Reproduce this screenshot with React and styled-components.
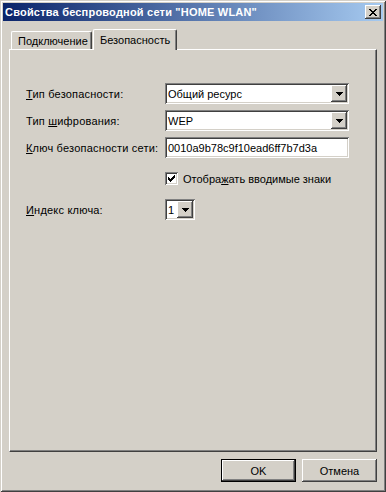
import React from 'react';
import styled, { createGlobalStyle } from 'styled-components';

const GlobalStyle = createGlobalStyle`
  html, body {
    margin: 0;
    padding: 0;
    background: #d4d0c8;
  }
  body {
    font-family: "Liberation Sans", Arial, sans-serif;
    font-size: 11px;
    color: #000;
  }
`;

const raised = `
  box-shadow: inset -1px -1px #404040, inset 1px 1px #ffffff,
    inset -2px -2px #808080, inset 2px 2px #d4d0c8;
`;

const sunken = `
  box-shadow: inset 1px 1px #808080, inset -1px -1px #ffffff,
    inset 2px 2px #404040, inset -2px -2px #d4d0c8;
`;

export default function App() {
  return (
    <>
      <GlobalStyle />
      <Window>
        <TitleBar>
          <Title>Свойства беспроводной сети "HOME WLAN"</Title>
          <CloseButton>
            <svg width="8" height="7" viewBox="0 0 8 7" shapeRendering="crispEdges">
              <path
                fill="#000"
                d="M0 0h2v1H0z M6 0h2v1H6z M1 1h2v1H1z M5 1h2v1H5z M2 2h4v1H2z M3 3h2v1H3z M2 4h4v1H2z M1 5h2v1H1z M5 5h2v1H5z M0 6h2v1H0z M6 6h2v1H6z"
              />
            </svg>
          </CloseButton>
        </TitleBar>

        <Body>
          <TabStrip>
            <Tab $w={81}>Подключение</Tab>
            <Tab $w={84} $active>Безопасность</Tab>
          </TabStrip>

          <Panel>
            <Form>
              <Label><u>Т</u>ип безопасности:</Label>
              <Combo $w={184}>
                <ComboText>Общий ресурс</ComboText>
                <DropButton><Arrow /></DropButton>
              </Combo>

              <Label>Тип <u>ш</u>ифрования:</Label>
              <Combo $w={184}>
                <ComboText>WEP</ComboText>
                <DropButton><Arrow /></DropButton>
              </Combo>

              <Label><u>К</u>люч безопасности сети:</Label>
              <TextBox>0010a9b78c9f10ead6ff7b7d3a</TextBox>

              <CheckRow>
                <CheckBox>
                  <svg width="7" height="7" viewBox="0 0 7 7" shapeRendering="crispEdges">
                    <path
                      fill="#000"
                      d="M0 2h1v3H0z M1 3h1v3H1z M2 4h1v3H2z M3 3h1v3H3z M4 2h1v3H4z M5 1h1v3H5z M6 0h1v3H6z"
                    />
                  </svg>
                </CheckBox>
                <span>Отобра<u>ж</u>ать вводимые знаки</span>
              </CheckRow>

              <Label $gap><u>И</u>ндекс ключа:</Label>
              <Combo $w={30} $gap>
                <ComboText>1</ComboText>
                <DropButton><Arrow /></DropButton>
              </Combo>
            </Form>
          </Panel>

          <Footer>
            <Button $default>OK</Button>
            <Button>Отмена</Button>
          </Footer>
        </Body>
      </Window>
    </>
  );
}

function Arrow() {
  return (
    <svg width="7" height="4" viewBox="0 0 7 4" shapeRendering="crispEdges">
      <path fill="#000" d="M0 0h7v1H0z M1 1h5v1H1z M2 2h3v1H2z M3 3h1v1H3z" />
    </svg>
  );
}

const Window = styled.div`
  width: 386px;
  height: 492px;
  box-sizing: border-box;
  padding: 3px;
  background: #d4d0c8;
  box-shadow: inset 1px 1px #d4d0c8, inset -1px -1px #404040,
    inset 2px 2px #ffffff, inset -2px -2px #808080;
  display: flex;
  flex-direction: column;
`;

const TitleBar = styled.div`
  height: 18px;
  flex: none;
  display: flex;
  align-items: center;
  justify-content: space-between;
  padding: 0 2px;
  background: linear-gradient(to right, #0a246a, #a6caf0);
`;

const Title = styled.div`
  color: #fff;
  font-weight: bold;
  font-size: 11px;
  letter-spacing: 0.2px;
  white-space: nowrap;
`;

const CloseButton = styled.div`
  width: 16px;
  height: 14px;
  background: #d4d0c8;
  ${raised}
  display: flex;
  align-items: center;
  justify-content: center;
`;

const Body = styled.div`
  flex: 1;
  display: flex;
  flex-direction: column;
  padding: 8px 6px 7px;
`;

const TabStrip = styled.div`
  height: 20px;
  flex: none;
  display: flex;
  align-items: flex-start;
  padding-left: 2px;
`;

const Tab = styled.div`
  position: relative;
  z-index: ${(p) => (p.$active ? 2 : 0)};
  box-sizing: border-box;
  width: ${(p) => p.$w}px;
  height: ${(p) => (p.$active ? 21 : 18)}px;
  margin-top: ${(p) => (p.$active ? 0 : 2)}px;
  margin-left: ${(p) => (p.$active ? 1 : 0)}px;
  padding-left: 6px;
  display: flex;
  align-items: center;
  background: #d4d0c8;
  border-top: 1px solid #fff;
  border-left: 1px solid #fff;
  border-right: 1px solid #404040;
  border-radius: 2px 2px 0 0;
  box-shadow: inset -1px 0 #808080;
  white-space: nowrap;
`;

const Panel = styled.div`
  flex: 1;
  position: relative;
  z-index: 1;
  box-sizing: border-box;
  border-top: 1px solid #fff;
  border-left: 1px solid #fff;
  border-right: 1px solid #404040;
  border-bottom: 1px solid #404040;
  box-shadow: inset -1px -1px #808080;
  padding: 33px 0 0 16px;
`;

const Form = styled.div`
  display: grid;
  grid-template-columns: 139px 184px;
  row-gap: 6px;
  align-items: center;
`;

const Label = styled.div`
  white-space: nowrap;
  letter-spacing: 0.2px;
  margin-top: ${(p) => (p.$gap ? 8 : 0)}px;
`;

const Combo = styled.div`
  width: ${(p) => p.$w}px;
  height: 21px;
  box-sizing: border-box;
  padding: 2px;
  background: #fff;
  ${sunken}
  display: flex;
  margin-top: ${(p) => (p.$gap ? 8 : 0)}px;
`;

const ComboText = styled.div`
  flex: 1;
  padding-left: 1px;
  display: flex;
  align-items: center;
  white-space: nowrap;
  overflow: hidden;
`;

const DropButton = styled.div`
  width: 16px;
  height: 17px;
  flex: none;
  background: #d4d0c8;
  ${raised}
  display: flex;
  align-items: center;
  justify-content: center;
`;

const TextBox = styled.div`
  width: 184px;
  height: 21px;
  box-sizing: border-box;
  padding: 0 3px;
  background: #fff;
  ${sunken}
  display: flex;
  align-items: center;
`;

const CheckRow = styled.div`
  grid-column: 2;
  display: flex;
  align-items: center;
  gap: 5px;
  margin-top: 8px;
  white-space: nowrap;
`;

const CheckBox = styled.div`
  width: 13px;
  height: 13px;
  background: #fff;
  ${sunken}
  display: flex;
  align-items: center;
  justify-content: center;
`;

const Footer = styled.div`
  flex: none;
  display: flex;
  justify-content: flex-end;
  gap: 6px;
  padding-top: 7px;
`;

const Button = styled.div`
  width: 75px;
  height: 23px;
  box-sizing: border-box;
  display: flex;
  align-items: center;
  justify-content: center;
  background: #d4d0c8;
  ${(p) =>
    p.$default
      ? `border: 1px solid #000;
         box-shadow: inset -1px -1px #404040, inset 1px 1px #ffffff,
           inset -2px -2px #808080;`
      : raised}
`;
